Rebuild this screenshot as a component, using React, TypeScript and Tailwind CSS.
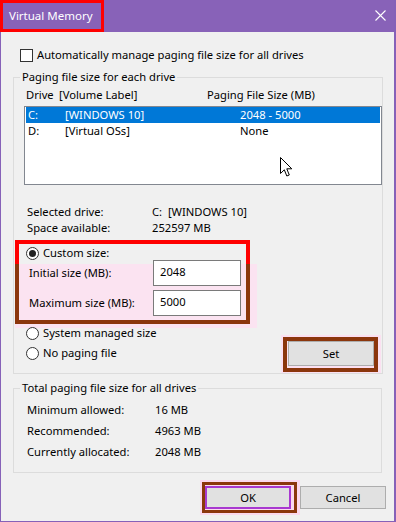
import React from "react";

function Radio({ checked = false }: { checked?: boolean }) {
  return (
    <span className="flex h-[13px] w-[13px] items-center justify-center rounded-full border border-[#333] bg-white">
      {checked && <span className="h-[7px] w-[7px] rounded-full bg-[#222]" />}
    </span>
  );
}

const totals = [
  { label: "Minimum allowed:", value: "16 MB" },
  { label: "Recommended:", value: "4963 MB" },
  { label: "Currently allocated:", value: "2048 MB" },
];

export default function App() {
  return (
    <div className="relative h-[522px] w-[396px] border-b border-l border-r-2 border-[#8661b8] bg-[#f0f0f0] font-['Noto_Sans',sans-serif] text-[11.2px] leading-[16px] text-black">
      {/* annotation highlights (behind content) */}
      <div className="pointer-events-none absolute left-[14px] top-[264px] h-[64px] w-[242px] bg-[#fbe3f1]" />
      <div className="pointer-events-none absolute left-[280px] top-[335px] h-[39px] w-[100px] bg-[#fbe0f1]" />
      <div className="pointer-events-none absolute left-[199px] top-[480px] h-[35px] w-[100px] bg-[#fbd9ee]" />

      {/* title bar */}
      <div className="relative flex h-[32px] items-center justify-between bg-[#8862b8] pl-[8px] pr-[8px] text-[11.5px] text-white">
        <span>Virtual Memory</span>
        <svg width="11" height="11" viewBox="0 0 11 11" className="mb-[2px]">
          <path d="M0.5 0.5 L10.5 10.5 M10.5 0.5 L0.5 10.5" stroke="white" strokeWidth="1.1" />
        </svg>
      </div>

      <div className="relative pl-[12px]">
        <div className="ml-[7px] mt-[15px] flex h-[16px] items-center gap-[4px]">
          <span className="h-[13px] w-[13px] border border-[#333] bg-white" />
          <span>Automatically manage paging file size for all drives</span>
        </div>

        <fieldset className="mt-[6px] w-[369px] border border-[#dcdcdc]">
          <legend className="ml-[6px] px-[2px] leading-[16px]">Paging file size for each drive</legend>

          <div className="mt-[2px] flex h-[16px] items-center pl-[12px]">
            <span className="w-[33px]">Drive</span>
            <span className="w-[148px]">[Volume Label]</span>
            <span>Paging File Size (MB)</span>
          </div>

          <div className="ml-[10px] mt-[3px] h-[79px] w-[358px] border border-[#828790] bg-white pl-[1px] pr-[1px]">
            <div className="flex h-[16px] items-center bg-[#0078d7] pl-[2px] text-white">
              <span className="w-[37px]">C:</span>
              <span className="w-[175px]">[WINDOWS 10]</span>
              <span>2048 - 5000</span>
            </div>
            <div className="flex h-[16px] items-center pl-[2px]">
              <span className="w-[37px]">D:</span>
              <span className="w-[175px]">[Virtual OSs]</span>
              <span>None</span>
            </div>
          </div>

          <div className="ml-[13px] mt-[19px] flex h-[16px] items-center">
            <span className="w-[125px]">Selected drive:</span>
            <span>C:&nbsp;&nbsp;[WINDOWS 10]</span>
          </div>
          <div className="ml-[13px] flex h-[16px] items-center">
            <span className="w-[125px]">Space available:</span>
            <span>252597 MB</span>
          </div>

          <div className="ml-[12px] mt-[10px] flex h-[14px] items-center gap-[4px]">
            <Radio checked />
            <span>Custom size:</span>
          </div>
          <div className="ml-[15px] flex h-[26px] items-center">
            <span className="w-[124px]">Initial size (MB):</span>
            <span className="flex h-[26px] w-[88px] items-center border border-[#7a7a7a] bg-white pb-[3px] pl-[6px]">2048</span>
          </div>
          <div className="ml-[15px] mt-[4px] flex h-[26px] items-center">
            <span className="w-[124px]">Maximum size (MB):</span>
            <span className="flex h-[26px] w-[88px] items-center border border-[#7a7a7a] bg-white pb-[3px] pl-[6px]">5000</span>
          </div>

          <div className="mt-[10px] flex justify-between pb-[7px] pr-[8px]">
            <div className="ml-[12px] flex flex-col gap-[6px]">
              <div className="flex h-[14px] items-center gap-[4px]">
                <Radio />
                <span>System managed size</span>
              </div>
              <div className="flex h-[14px] items-center gap-[4px]">
                <Radio />
                <span>No paging file</span>
              </div>
            </div>
            <button className="mt-[15px] flex h-[25px] w-[86px] items-center justify-center border border-[#adadad] bg-[#e1e1e1]">
              Set
            </button>
          </div>
        </fieldset>

        <fieldset className="mt-[6px] w-[369px] border border-[#dcdcdc] pb-[10px]">
          <legend className="ml-[6px] px-[2px] leading-[16px]">Total paging file size for all drives</legend>
          <div className="mt-[3px]">
            {totals.map((t) => (
              <div key={t.label} className="ml-[13px] flex h-[21px] items-center">
                <span className="w-[128px]">{t.label}</span>
                <span>{t.value}</span>
              </div>
            ))}
          </div>
        </fieldset>

        <div className="mt-[13px] flex gap-[9px] pl-[192px]">
          <button className="flex h-[23px] w-[86px] items-center justify-center border-2 border-[#a838d0] bg-[#e1e1e1]">
            OK
          </button>
          <button className="flex h-[23px] w-[86px] items-center justify-center border border-[#adadad] bg-[#e1e1e1]">
            Cancel
          </button>
        </div>
      </div>

      {/* annotation boxes (over content) */}
      <div className="pointer-events-none absolute left-[-1px] top-0 h-[32px] w-[104px] border-[3px] border-[#ff0000]" />
      <div className="pointer-events-none absolute left-[14px] top-[240px] h-[84px] w-[235px] border-[4px] border-[#ff0000]" />
      <div className="pointer-events-none absolute left-[14px] top-[264px] h-[60px] w-[235px] border-[4px] border-t-0 border-[#8b360c]" />
      <div className="pointer-events-none absolute left-[282px] top-[337px] h-[35px] w-[95px] border-[4px] border-[#8b360c]" />
      <div className="pointer-events-none absolute left-[201px] top-[482px] h-[31px] w-[95px] border-[3px] border-[#8b360c]" />

      {/* mouse pointer */}
      <svg className="pointer-events-none absolute left-[279px] top-[157px]" width="13" height="21" viewBox="0 0 13 21">
        <path d="M0.5 0.5 L0.5 16.5 L4.3 12.8 L6.8 19 L9.3 18 L6.8 11.8 L11.8 11.8 Z" fill="white" stroke="black" strokeWidth="1" strokeLinejoin="miter" />
      </svg>
    </div>
  );
}
